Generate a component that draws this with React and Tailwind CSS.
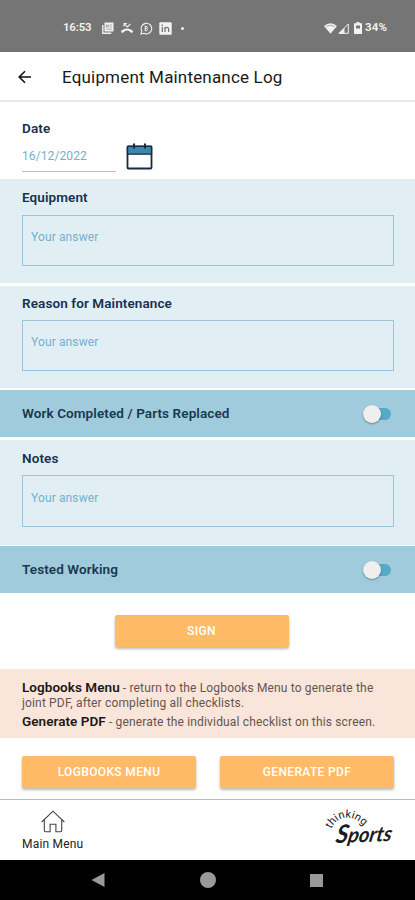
import { useState } from "react";

const StatusBar = () => (
  <div className="h-[52px] bg-[#757575] text-[#f2f2f2] flex items-start justify-between pl-[63px] pr-[26px] pt-[20px]">
    <div className="flex items-center h-4">
      <span className="text-[11.5px] font-semibold tracking-[-0.2px] w-[39px]">
        16:53
      </span>
      {/* News */}
      <svg className="w-3 h-3" viewBox="0 0 12 12" fill="none">
        <path d="M2.5 0.5h9v9h-9z" fill="#f2f2f2" />
        <path d="M0.8 3v8.3h8.5" stroke="#f2f2f2" strokeWidth="1.4" />
        <path d="M4.3 3h2v2h-2zM7.6 3h2.2M7.6 5h2.2M4.3 7.2h5.5" stroke="#757575" strokeWidth="0.6" />
      </svg>
      {/* Missed call */}
      <svg className="w-3 h-3 ml-[7px]" viewBox="0 0 12 12" fill="none" stroke="#f2f2f2">
        <path d="M3 4.4V1.5h3M3.2 1.7L6.3 5L9.5 1.8" strokeWidth="1.1" />
        <path d="M1 9.6Q6 5.4 11 9.6" strokeWidth="2" />
        <path d="M0.6 10.3l2.3-1.8M11.4 10.3L9.1 8.5" strokeWidth="2.2" />
      </svg>
      {/* Chat */}
      <svg className="w-[13px] h-[13px] ml-[7px]" viewBox="0 0 13 13" fill="none" stroke="#f2f2f2">
        <path d="M1 12l.8-2.8A5.3 5.3 0 1 1 4 11.3z" strokeWidth="1.1" />
        <path d="M5.2 4v5M5.2 4.3h1.6q1.2 1 0 2H5.2M6.8 6.3q1.5 1.2 0 2.4H5.2" strokeWidth="1" />
      </svg>
      {/* LinkedIn */}
      <svg className="w-[13px] h-[13px] ml-[6px]" viewBox="0 0 13 13">
        <rect x="0.3" y="0.3" width="12.4" height="12.4" rx="1" fill="#f2f2f2" />
        <path d="M3.3 5v5M3.3 2.6v1.4M6 10V5M6 7q0-1.6 1.8-1.6T9.6 7v3" fill="none" stroke="#757575" strokeWidth="1.3" />
      </svg>
      <span className="w-[3px] h-[3px] rounded-full bg-[#f2f2f2] ml-[9px]" />
    </div>
    <div className="flex items-center h-4">
      <svg className="w-[13px] h-[11px]" viewBox="0 0 13 11">
        <path d="M0 3Q6.5-2.4 13 3L6.5 10.8z" fill="#f2f2f2" />
        <path d="M2.4 3.4Q6.5 1 10.6 3.4" fill="none" stroke="#757575" strokeWidth="0.6" />
      </svg>
      <svg className="w-[11px] h-[11px] ml-[1px]" viewBox="0 0 11 11">
        <path d="M1 10.3L10.3 1v9.3z" fill="none" stroke="#f2f2f2" />
        <path d="M0.5 10.7L6.5 5v5.7z" fill="#f2f2f2" />
      </svg>
      <svg className="w-2 h-3 ml-[5px]" viewBox="0 0 8 12">
        <path d="M2.5 0h3v1.3H8V12H0V1.3h2.5z" fill="#f2f2f2" />
        <path d="M2 3.5h4v3H2z" fill="#757575" />
      </svg>
      <span className="text-[11.5px] font-semibold ml-[3px] w-6 tracking-[0.2px]">34%</span>
    </div>
  </div>
);

const Header = () => (
  <div className="h-[50px] bg-white border-b-2 border-[#e8e8e8] flex items-center">
    <svg className="w-[14px] h-[14px] ml-[18px] mt-[2px]" viewBox="0 0 14 14" fill="none" stroke="#111" strokeWidth="1.6">
      <path d="M13 7H1.5M7 1.2L1.2 7L7 12.8" />
    </svg>
    <h1 className="ml-[30px] mt-[4px] text-[17px] font-[450] text-[#1a1a1a] tracking-[0.18px] whitespace-nowrap">
      Equipment Maintenance Log
    </h1>
  </div>
);

const CalendarIcon = () => (
  <svg className="w-[27px] h-[27px]" viewBox="0 0 27 27">
    <rect x="1.5" y="3.5" width="24" height="22" rx="0.8" fill="#fff" stroke="#172c43" strokeWidth="1.8" />
    <path d="M1.5 3.2h24v8h-24z" fill="#3b87ae" />
    <path d="M1 3.4h25M1 11.2h25M1.5 3v9M25.5 3v9" stroke="#172c43" strokeWidth="1.3" />
    <path d="M8 0.5v5M19 0.5v5" stroke="#172c43" strokeWidth="2" />
  </svg>
);

const AnswerField = ({ label, className, fieldClassName = "h-[51px] pt-[13px]" }) => (
  <div className={`bg-[#e1eff5] px-[22px] ${className}`}>
    <label className="block text-[13.5px] leading-4 font-semibold text-[#18304d] tracking-[0.1px]">
      {label}
      <textarea
        placeholder="Your answer"
        className={`block mt-[9px] w-[372px] border border-[#9cc5da] resize-none outline-none px-2 text-[12px] leading-4 font-normal tracking-[0.12px] placeholder:text-[#76b0ca] ${fieldClassName}`}
      />
    </label>
  </div>
);

const ToggleRow = ({ label, className }) => {
  const [checked, setChecked] = useState(false);

  return (
    <div className={`bg-[#a0cbdd] flex items-center justify-between pl-[22px] pr-[24px] ${className}`}>
      <span className="text-[13.5px] font-semibold text-[#18384f] tracking-[0.1px]">
        {label}
      </span>
      <button
        type="button"
        role="switch"
        aria-checked={checked}
        aria-label={label}
        onClick={() => setChecked(!checked)}
        className={`w-7 h-3 rounded-full bg-[#56a9c7] flex items-center ${checked ? "justify-end" : "justify-start"}`}
      >
        <span className="w-[18px] h-[18px] shrink-0 rounded-full bg-[#efefef] shadow-[0_1px_2px_rgba(0,0,0,0.35)]" />
      </button>
    </div>
  );
};

const ActionButton = ({ children }) => (
  <button
    type="button"
    className="w-[174px] h-8 rounded-[2px] bg-[#ffba68] text-white text-[12px] font-medium tracking-[0.35px] shadow-[0_2px_3px_rgba(0,0,0,0.28)]"
  >
    {children}
  </button>
);

const SportsLogo = () => (
  <svg className="w-[74px] h-[46px] overflow-visible" viewBox="-2 -2 74 46" fill="#1c1c1c">
    <path id="logo-arc" d="M6 19C14 4 28 4 41 18" fill="none" />
    <text fontSize="11" fontFamily="Roboto, sans-serif" fontWeight="400">
      <textPath href="#logo-arc" textLength="40">thinking</textPath>
    </text>
    <text
      transform="translate(10 33) rotate(-2) skewX(-12)"
      fontSize="21"
      fontFamily="Lato, sans-serif"
      fontWeight="700"
      fontStyle="italic"
      textLength="56"
      lengthAdjust="spacingAndGlyphs"
    >
      <tspan fontSize="25">S</tspan>ports
    </text>
  </svg>
);

const App = () => {
  return (
    <div className="w-[415px] h-[900px] overflow-hidden bg-white font-['Roboto',sans-serif] flex flex-col">
      <StatusBar />
      <Header />

      {/* Date */}
      <div className="h-[77px] pl-[22px] pt-[18px]">
        <p className="text-[13.5px] leading-4 font-semibold text-[#18304d] tracking-[0.1px]">
          Date
        </p>
        <div className="flex items-end mt-[7px]">
          <div className="w-[94px] h-[29px] border-b border-[#9cc5da] pt-[5px] text-[12px] leading-4 text-[#76b0ca] tracking-[0.1px]">
            16/12/2022
          </div>
          <div className="ml-[10px] mb-[2px]">
            <CalendarIcon />
          </div>
        </div>
      </div>

      <AnswerField
        label="Equipment"
        className="h-[104px] pt-[10px]"
        fieldClassName="mt-[10px] h-[51px] pt-[13px]"
      />
      <AnswerField label="Reason for Maintenance" className="mt-[3px] h-[102px] pt-[9px]" />
      <ToggleRow label="Work Completed / Parts Replaced" className="mt-[2px] h-[47px]" />
      <AnswerField
        label="Notes"
        className="mt-[3px] h-[105px] pt-[10px]"
        fieldClassName="h-[52px] pt-[14px]"
      />
      <ToggleRow label="Tested Working" className="mt-px h-[47px]" />

      <div className="flex justify-center pt-[22px] pr-[12px]">
        <ActionButton>SIGN</ActionButton>
      </div>

      {/* Help text */}
      <div className="mt-[22px] h-[69px] bg-[#f9e5da] px-[22px] pt-[11px] text-[12px] text-[#66554f] tracking-[0.16px] whitespace-nowrap">
        <p className="leading-[15px]">
          <b className="text-[13.5px] font-semibold text-[#1d1817] tracking-[0.05px]">Logbooks Menu</b> - return to the Logbooks Menu to generate the
          <br />
          joint PDF, after completing all checklists.
        </p>
        <p className="mt-[3px] leading-[15px]">
          <b className="text-[13.5px] font-semibold text-[#1d1817] tracking-[0.05px]">Generate PDF</b> - generate the individual checklist on this screen.
        </p>
      </div>

      <div className="flex justify-between pl-[22px] pr-[21px] pt-[18px] h-[61px]">
        <ActionButton>LOGBOOKS MENU</ActionButton>
        <ActionButton>GENERATE PDF</ActionButton>
      </div>

      {/* Footer */}
      <div className="h-[61px] border-t border-[#9fc3d8] flex justify-between pl-[22px] pr-[18px]">
        <div className="flex flex-col items-center pt-[10px]">
          <svg className="w-6 h-[23px]" viewBox="0 0 24 23" fill="none" stroke="#444" strokeWidth="1.1">
            <path d="M0.7 12L12 1.2L23.3 12M3.3 10v10.5q0 1.2 1.2 1.2h4.6v-7.4h5.8v7.4h4.6q1.2 0 1.2-1.2V10" />
          </svg>
          <span className="mt-[3px] text-[12px] leading-4 text-[#222] tracking-[0.2px]">Main Menu</span>
        </div>
        <div className="pt-[8px]">
          <SportsLogo />
        </div>
      </div>

      {/* Android navigation */}
      <div className="h-10 bg-black flex items-center justify-between pl-[91px] pr-[92px]">
        <svg className="w-[14px] h-[14px]" viewBox="0 0 14 14" fill="#999">
          <path d="M0.5 7L13.5 0v14z" />
        </svg>
        <span className="w-4 h-4 rounded-full bg-[#999]" />
        <span className="w-[13px] h-[13px] bg-[#999]" />
      </div>
    </div>
  );
};

export default App;
